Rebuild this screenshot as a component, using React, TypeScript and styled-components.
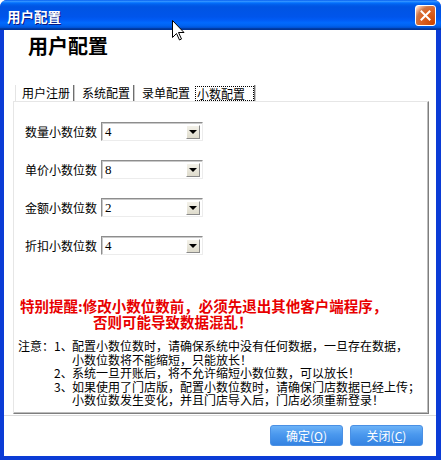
import React from "react";
import styled, { createGlobalStyle } from "styled-components";

const Global = createGlobalStyle`
  html, body { margin: 0; padding: 0; background: #ffffff; }
  body { font-family: "Noto Sans CJK SC", "Noto Sans", sans-serif; }
`;

const FONT = `"Noto Sans CJK SC", "Noto Sans", sans-serif`;

const Window = styled.div`
  position: relative;
  width: 441px;
  height: 460px;
  display: flex;
  flex-direction: column;
  background: #0b3cd6;
  border-radius: 7px 7px 0 0;
  overflow: hidden;
`;

const TitleBar = styled.div`
  height: 30px;
  flex: none;
  display: flex;
  align-items: center;
  justify-content: space-between;
  padding: 0 5px 0 7px;
  background: linear-gradient(
    to bottom,
    #0058ee 0%,
    #3593ff 4%,
    #288eff 6%,
    #127dff 8%,
    #036ffc 10%,
    #0262ee 14%,
    #0057e5 20%,
    #0054e3 24%,
    #0055eb 56%,
    #005bf5 66%,
    #026afe 76%,
    #0062ef 86%,
    #0052d6 92%,
    #0040ab 94%,
    #003092 100%
  );
`;

const TitleText = styled.span`
  font-family: ${FONT};
  font-size: 13.5px;
  font-weight: 700;
  color: #ffffff;
  text-shadow: 1px 1px 0 #0a1883;
  line-height: 16px;
  margin-top: 1px;
`;

const CloseButton = styled.div`
  width: 21px;
  height: 21px;
  box-sizing: border-box;
  border: 1px solid #ffffff;
  border-radius: 3px;
  display: flex;
  align-items: center;
  justify-content: center;
  background: radial-gradient(
    circle at 90% 90%,
    #cc4600 0%,
    #dc6527 55%,
    #cd7546 70%,
    #ffccb2 90%,
    #ffffff 100%
  );
`;

const Client = styled.div`
  flex: 1;
  margin: 0 5px 4px 4px;
  background: #ffffff;
  display: flex;
  flex-direction: column;
`;

const Heading = styled.h1`
  margin: 4px 0 0 0;
  padding-left: 24px;
  font-family: ${FONT};
  font-size: 20px;
  font-weight: 700;
  line-height: 24px;
  color: #000;
`;

const TabRow = styled.div`
  margin-top: 26px;
  height: 17px;
  padding-left: 11px;
  display: flex;
  align-items: stretch;
`;

const Tab = styled.div<{ $first?: boolean; $sep?: boolean; $active?: boolean }>`
  display: flex;
  align-items: center;
  font-family: ${FONT};
  font-size: 12px;
  line-height: 14px;
  color: #000;
  padding: ${(p) => (p.$active ? "0 0 0 1px" : p.$first ? "0 3px 0 6px" : "0 3px 0 8px")};
  border-left: ${(p) => (p.$first ? "1px solid #e4e4e4" : "none")};
  border-right: ${(p) => (p.$sep ? "1px solid #6f6f6f" : "1px solid transparent")};
  box-shadow: ${(p) => (p.$sep ? "1px 0 0 #c8c8c8" : "none")};
  margin-top: 1px;
`;

const Focus = styled.span`
  border: 1px dotted #000;
  padding: 0 8px 0 1px;
  line-height: 13px;
`;

const Panel = styled.div`
  margin-left: 9px;
  width: 416px;
  height: 313px;
  box-sizing: border-box;
  border-style: solid;
  border-width: 1px;
  border-color: #e6e6e6 #7e7e7e #7e7e7e #e6e6e6;
  box-shadow: inset -1px -1px 0 #bdbdbd;
  display: flex;
  flex-direction: column;
`;

const Form = styled.div`
  padding: 20px 0 0 11px;
  display: flex;
  flex-direction: column;
  gap: 19px;
`;

const Row = styled.div`
  display: flex;
  align-items: center;
  gap: 4px;
  height: 19px;
`;

const Label = styled.span`
  width: 72px;
  font-family: ${FONT};
  font-size: 12px;
  line-height: 14px;
  color: #000;
  white-space: nowrap;
`;

const Combo = styled.div`
  width: 102px;
  height: 19px;
  box-sizing: border-box;
  border-style: solid;
  border-width: 1px;
  border-color: #8d8d8d #ececec #ececec #8d8d8d;
  box-shadow: inset 1px 1px 0 #c9c9c9;
  background: #fff;
  display: flex;
  align-items: center;
  justify-content: space-between;
  padding: 0 2px 0 3px;
`;

const ComboValue = styled.span`
  font-family: "Liberation Serif", "DejaVu Serif", serif;
  font-size: 13px;
  line-height: 14px;
  color: #000;
`;

const DropButton = styled.div`
  width: 14px;
  height: 14px;
  box-sizing: border-box;
  border-style: solid;
  border-width: 1px;
  border-color: #ffffff #8a8a8a #8a8a8a #ffffff;
  background: linear-gradient(to bottom, #f4f2ea, #dedbcc);
  display: flex;
  align-items: center;
  justify-content: center;
`;

const Arrow = styled.span`
  width: 0;
  height: 0;
  border-left: 4px solid transparent;
  border-right: 4px solid transparent;
  border-top: 4px solid #000;
`;

const Warning = styled.div`
  margin-top: 43px;
  padding-left: 6px;
  font-family: ${FONT};
  font-size: 14.5px;
  font-weight: 700;
  line-height: 16px;
  color: #e80000;
  white-space: nowrap;
`;

const WarnLine = styled.div<{ $indent?: number }>`
  padding-left: ${(p) => p.$indent ?? 0}px;
`;

const Notes = styled.div`
  margin-top: 9px;
  padding-left: 4px;
  display: grid;
  grid-template-columns: 36px 18px auto;
  font-family: ${FONT};
  font-size: 12px;
  line-height: 13.5px;
  color: #000;
  white-space: nowrap;
`;

const NoteCell = styled.div``;

const Separator = styled.div`
  margin-top: 1px;
  height: 1px;
  background: #dcdcdc;
`;

const Footer = styled.div`
  padding: 9px 13px 0 0;
  display: flex;
  justify-content: flex-end;
  gap: 7px;
`;

const Button = styled.div`
  width: 73px;
  height: 21px;
  box-sizing: border-box;
  border-radius: 3px;
  border: 1px solid #4a90e4;
  background: linear-gradient(to bottom, #6cb2f7 0%, #4a98ee 45%, #3483e2 100%);
  display: flex;
  align-items: center;
  justify-content: center;
  font-family: ${FONT};
  font-size: 12px;
  line-height: 14px;
  color: #ffffff;
`;

const Cursor = styled.svg`
  position: absolute;
  left: 172px;
  top: 20px;
`;

const rows: [string, string][] = [
  ["数量小数位数", "4"],
  ["单价小数位数", "8"],
  ["金额小数位数", "2"],
  ["折扣小数位数", "4"],
];

export default function App() {
  return (
    <>
      <Global />
      <Window>
        <TitleBar>
          <TitleText>用户配置</TitleText>
          <CloseButton>
            <svg width="11" height="11" viewBox="0 0 11 11">
              <path d="M1.5 1.5 L9.5 9.5 M9.5 1.5 L1.5 9.5" stroke="#fff" strokeWidth="2" strokeLinecap="square" />
            </svg>
          </CloseButton>
        </TitleBar>
        <Client>
          <Heading>用户配置</Heading>
          <TabRow>
            <Tab $first $sep>用户注册</Tab>
            <Tab $sep>系统配置</Tab>
            <Tab>录单配置</Tab>
            <Tab $active $sep>
              <Focus>小数配置</Focus>
            </Tab>
          </TabRow>
          <Panel>
            <Form>
              {rows.map(([label, value]) => (
                <Row key={label}>
                  <Label>{label}</Label>
                  <Combo>
                    <ComboValue>{value}</ComboValue>
                    <DropButton>
                      <Arrow />
                    </DropButton>
                  </Combo>
                </Row>
              ))}
            </Form>
            <Warning>
              <WarnLine>特别提醒:修改小数位数前，必须先退出其他客户端程序，</WarnLine>
              <WarnLine $indent={73}>否则可能导致数据混乱！</WarnLine>
            </Warning>
            <Notes>
              <NoteCell>注意：</NoteCell>
              <NoteCell>1、</NoteCell>
              <NoteCell>
                配置小数位数时，请确保系统中没有任何数据，一旦存在数据，
                <br />
                小数位数将不能缩短，只能放长！
              </NoteCell>
              <NoteCell />
              <NoteCell>2、</NoteCell>
              <NoteCell>系统一旦开账后，将不允许缩短小数位数，可以放长！</NoteCell>
              <NoteCell />
              <NoteCell>3、</NoteCell>
              <NoteCell>
                如果使用了门店版，配置小数位数时，请确保门店数据已经上传；
                <br />
                小数位数发生变化，并且门店导入后，门店必须重新登录！
              </NoteCell>
            </Notes>
          </Panel>
          <Separator />
          <Footer>
            <Button>
              确定(<u>O</u>)
            </Button>
            <Button>
              关闭(<u>C</u>)
            </Button>
          </Footer>
        </Client>
        <Cursor width="13" height="21" viewBox="0 0 13 21">
          <polygon
            points="0.5,0.5 0.5,17.5 4.5,13.5 7.5,20 9.5,19 6.5,12.5 12,12.5"
            fill="#ffffff"
            stroke="#000000"
            strokeWidth="1"
          />
        </Cursor>
      </Window>
    </>
  );
}
